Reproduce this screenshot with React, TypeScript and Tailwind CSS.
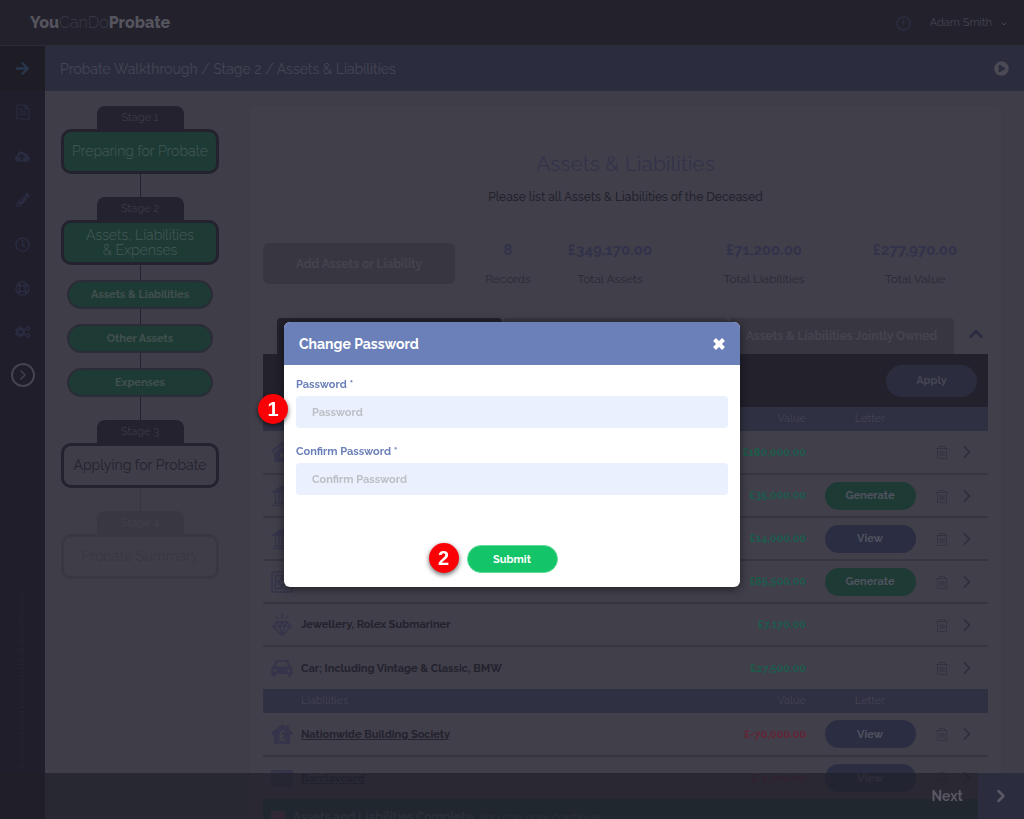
import React, { useState } from "react";
import {
  FaArrowRight,
  FaCloudUploadAlt,
  FaCogs,
  FaPencilAlt,
  FaPlayCircle,
  FaRegClock,
  FaRegLifeRing,
} from "react-icons/fa";
import { FiChevronDown, FiChevronRight, FiChevronUp } from "react-icons/fi";

const navItems = [
  { label: "Documents", icon: <DocIcon /> },
  { label: "Upload", icon: <FaCloudUploadAlt size={15} /> },
  { label: "Edit", icon: <FaPencilAlt size={14} /> },
  { label: "History", icon: <FaRegClock size={15} /> },
  { label: "Support", icon: <FaRegLifeRing size={15} /> },
  { label: "Settings", icon: <FaCogs size={16} /> },
];

const stats = [
  { value: "8", label: "Records" },
  { value: "£349,170.00", label: "Total Assets" },
  { value: "£71,200.00", label: "Total Liabilities" },
  { value: "£277,970.00", label: "Total Value" },
];

type Row = {
  icon: React.ReactNode;
  name: string;
  value: string;
  letter?: "Generate" | "View";
  link?: boolean;
};

const assets: Row[] = [
  { icon: <HouseIcon />, name: "Property", value: "£180,000.00" },
  { icon: <BankIcon />, name: "Bank Account", value: "£35,000.00", letter: "Generate" },
  { icon: <BankIcon />, name: "Savings", value: "£14,000.00", letter: "View" },
  { icon: <SafeIcon />, name: "Investments", value: "£85,500.00", letter: "Generate" },
  { icon: <DiamondIcon />, name: "Jewellery, Rolex Submariner", value: "£7,170.00" },
  { icon: <CarIcon />, name: "Car; Including Vintage & Classic, BMW", value: "£27,500.00" },
];

const liabilities: Row[] = [
  { icon: <MortgageIcon />, name: "Nationwide Building Society", value: "£-70,000.00", letter: "View", link: true },
  { icon: <CardIcon />, name: "Barclaycard", value: "£-1,200.00", letter: "View", link: true },
];

function DocIcon() {
  return (
    <svg width="14" height="16" viewBox="0 0 14 16" fill="none" stroke="currentColor" strokeWidth="1.2">
      <path d="M1 1h8l4 4v10H1zM9 1v4h4M3.5 8h7M3.5 10.500h7M3.5 5.500h3" />
    </svg>
  );
}

function HouseIcon() {
  return (
    <svg width="22" height="22" viewBox="0 0 22 22" fill="currentColor">
      <path d="M11 1 0 10l1.500 1.600L11 4l9.500 7.600L22 10l-4-3.300V2h-3v2.200z" />
      <path fillRule="evenodd" d="M3.500 12 11 6l7.500 6v9h-15zM9 12v4h4v-4z" />
    </svg>
  );
}

function BankIcon() {
  return (
    <svg width="22" height="22" viewBox="0 0 22 22" fill="none" stroke="currentColor" strokeWidth="1.500">
      <path d="M2 7 11 1.500 20 7z" fill="currentColor" />
      <path d="M4.500 8v9M8 8v9M14 8v9M17.500 8v9M11 8v9M3 18h16M1 20.500h20" />
    </svg>
  );
}

function SafeIcon() {
  return (
    <svg width="22" height="22" viewBox="0 0 22 22" fill="none" stroke="currentColor" strokeWidth="1.600">
      <rect x="1" y="1" width="20" height="20" rx="2" />
      <rect x="4.500" y="4.500" width="13" height="13" />
      <circle cx="11" cy="11" r="3" />
      <path d="M11 5v3M11 14v3M5 11h3M14 11h3" />
    </svg>
  );
}

function DiamondIcon() {
  return (
    <svg width="22" height="22" viewBox="0 0 22 22" fill="none" stroke="currentColor" strokeWidth="1.500">
      <path d="M6 8h10l4 4.500L11 21.500 2 12.500zM2 12.500h18M6 8l2.500 4.500L11 21l2.500-8.500L16 8M8.500 12.500 11 8l2.500 4.500M11 0v4.500M5 1.500l2 3.500M17 1.500 15 5" />
    </svg>
  );
}

function CarIcon() {
  return (
    <svg width="22" height="18" viewBox="0 0 22 18" fill="currentColor">
      <path
        fillRule="evenodd"
        d="M6 1h10q1.500 0 2 1.500L19.300 7H21v1.500l-1 .3q2 1.200 2 3V15h-1.500v2.500h-3.500V15H5v2.500H1.500V15H0v-3.200q0-1.800 2-3L1 8.500V7h1.700L4 2.500Q4.500 1 6 1zm.3 1.800L5 7.500h12l-1.300-4.700zM4 10a1.500 1.500 0 1 0 0 3 1.500 1.500 0 0 0 0-3zm14 0a1.500 1.500 0 1 0 0 3 1.500 1.500 0 0 0 0-3z"
      />
    </svg>
  );
}

function MortgageIcon() {
  return (
    <svg width="22" height="20" viewBox="0 0 22 20" fill="none">
      <path fill="#35344a" d="M11 0 0 9l1.200 2H3v9h16v-9h1.800L22 9l-3.500-3V1H15v2z" />
      <path stroke="#403f49" strokeWidth="1.800" d="M14 8.500Q13 6.500 11 7t-1 4v2.500Q10 15.500 8 16h6.500M8 12h5" />
    </svg>
  );
}

function CardIcon() {
  return (
    <svg width="22" height="17" viewBox="0 0 22 17">
      <rect width="22" height="17" rx="1" fill="#35344a" />
      <path d="M2 3h8M2 9h18" stroke="#403f49" strokeWidth="1" />
    </svg>
  );
}

function TrashIcon() {
  return (
    <svg width="14" height="14" viewBox="0 0 14 14" fill="none" stroke="currentColor" strokeWidth="1">
      <path d="M1 3.500h12M4.500 3.500v-2h5v2M2.500 3.500v10h9v-10M5 6v5M7 6v5M9 6v5" />
    </svg>
  );
}

function Stage({ title, faded, done, children }: { title: string; faded?: boolean; done?: boolean; children: React.ReactNode }) {
  return (
    <div className="flex w-full flex-col items-center">
      <div
        className={`h-[23px] w-[87px] rounded-t-lg pt-1 text-center text-[11px] leading-4 ${
          faded ? "bg-[#393842] text-[#42414b]" : "bg-[#23222e] text-[#3c3b47]"
        }`}
      >
        {title}
      </div>
      <a
        href="#"
        className={`flex h-[45px] w-full items-center justify-center rounded-[10px] border-[3px] text-center text-sm leading-[15px] ${
          faded ? "border-[#393842] text-[#383741]" : "border-[#23222e]"
        } ${done ? "bg-[#1e3a34] font-light text-[#465a5a]" : faded ? "" : "text-[#23222d]"}`}
      >
        <span>{children}</span>
      </a>
    </div>
  );
}

function Step({ children }: { children: React.ReactNode }) {
  return (
    <>
      <div className="h-[15px] w-px bg-[#23222e]" />
      <a
        href="#"
        className="flex h-[29px] w-[146px] items-center justify-center rounded-full border-2 border-[#2b2c37] bg-[#1e3a34] pt-0.5 text-[11px] font-bold text-[#42504f]"
      >
        {children}
      </a>
    </>
  );
}

function SectionHead({ title }: { title: string }) {
  return (
    <tr className="h-6 bg-[#2f3042] text-[11px] text-[#434254]">
      <th />
      <th className="text-left font-normal">{title}</th>
      <th className="text-right font-normal">Value</th>
      <th className="font-normal">Letter</th>
      <th />
      <th />
    </tr>
  );
}

function AssetRow({ row, last }: { row: Row; last?: boolean }) {
  return (
    <tr className={`h-[43px] text-[11px] font-bold ${last ? "" : "border-b-2 border-[#373640]"}`}>
      <td className="pl-2 text-[#35344a]">{row.icon}</td>
      <td className="truncate pt-0.5 text-[#23222d]">
        {row.link ? (
          <a href="#" className="underline">
            {row.name}
          </a>
        ) : (
          row.name
        )}
      </td>
      <td className={`pt-0.5 text-right ${row.value.includes("-") ? "text-[#642535]" : "text-[#1c5c4a]"}`}>{row.value}</td>
      <td className="text-center">
        {row.letter && (
          <button
            className={`h-7 w-[91px] rounded-full pt-0.5 align-middle text-[#50535f] ${
              row.letter === "View" ? "bg-[#2b2d42]" : "bg-[#1e3a34]"
            }`}
          >
            {row.letter}
          </button>
        )}
      </td>
      <td>
        <button aria-label={`Delete ${row.name}`} className="block px-px text-[#34333e]">
          <TrashIcon />
        </button>
      </td>
      <td>
        <button aria-label={`Open ${row.name}`} className="block pl-[7px] text-[#2e2d39]">
          <FiChevronRight size={20} />
        </button>
      </td>
    </tr>
  );
}

function Badge({ children, className }: { children: React.ReactNode; className: string }) {
  return (
    <span
      className={`absolute flex size-[30px] items-center justify-center rounded-full bg-[#fb0007] font-['Liberation_Sans'] text-xl font-bold text-white shadow-[0_2px_5px_rgba(0,0,0,0.6)] ${className}`}
    >
      {children}
    </span>
  );
}

function ChangePassword() {
  const [password, setPassword] = useState("");
  const [confirm, setConfirm] = useState("");
  const labelStyle = "mb-[3px] block text-[11px] leading-4 font-bold text-[#6b80b9]";
  const inputStyle =
    "h-8 w-full rounded bg-[#eaf0fd] px-4 text-[11px] font-bold outline-none placeholder:text-[#bcbfc6]";

  return (
    <div className="fixed inset-0 flex items-start justify-center pt-[322px]">
      <form
        role="dialog"
        aria-label="Change Password"
        className="w-full max-w-[456px] rounded-md bg-white shadow-[0_2px_10px_rgba(0,0,0,0.5)]"
        onSubmit={(e) => e.preventDefault()}
      >
        <div className="flex h-[43px] items-center justify-between rounded-t-md bg-[#6b80b9] px-[15px] text-white">
          <h2 className="text-sm font-bold">Change Password</h2>
          <button type="button" aria-label="Close">
            <svg width="12" height="12" viewBox="0 0 12 12" stroke="currentColor" strokeWidth="4">
              <path d="m1.500 1.500 9 9M10.500 1.500l-9 9" />
            </svg>
          </button>
        </div>
        <div className="px-3 pt-3 pb-[14px]">
          <div className="relative mb-4">
            <label htmlFor="password" className={labelStyle}>
              Password *
            </label>
            <input
              id="password"
              type="password"
              placeholder="Password"
              value={password}
              onChange={(e) => setPassword(e.target.value)}
              className={inputStyle}
            />
            <Badge className="top-[17px] left-[-38px]">1</Badge>
          </div>
          <div className="mb-[50px]">
            <label htmlFor="confirm" className={labelStyle}>
              Confirm Password *
            </label>
            <input
              id="confirm"
              type="password"
              placeholder="Confirm Password"
              value={confirm}
              onChange={(e) => setConfirm(e.target.value)}
              className={inputStyle}
            />
          </div>
          <div className="flex justify-center">
            <div className="relative">
              <button
                type="submit"
                className="block h-7 w-[91px] rounded-full border border-[#5fdc98] bg-[#13c468] pt-0.5 text-[11px] font-bold text-white"
              >
                Submit
              </button>
              <Badge className="top-[-2px] left-[-38px]">2</Badge>
            </div>
          </div>
        </div>
      </form>
    </div>
  );
}

const App = () => {
  return (
    <div className="flex h-screen flex-col overflow-hidden bg-[#3f3e48] font-['Raleway','Lato',sans-serif]">
      <header className="flex h-[46px] shrink-0 items-center justify-between border-b border-[#2c2b38] bg-[#22212c] pr-4 pl-[30px]">
        <a href="#" className="text-base text-[#3b3a45]">
          <b className="font-extrabold text-[#55545d]">You</b>
          <span className="font-light">CanDo</span>
          <b className="font-extrabold text-[#55545d]">Probate</b>
        </a>
        <div className="flex items-center pt-0.5 text-[11px] text-[#474651]">
          <svg className="mr-[19px] text-[#2b2d42]" width="15" height="15" viewBox="0 0 15 15" fill="none" stroke="currentColor" strokeWidth="1.500">
            <circle cx="7.500" cy="7.500" r="6.500" />
            <path d="M7.500 4v5" />
          </svg>
          <button className="flex items-center gap-2">
            Adam Smith
            <FiChevronDown size={8} strokeWidth={3} />
          </button>
        </div>
      </header>

      <div className="flex min-h-0 grow">
        <nav className="flex w-[45px] shrink-0 flex-col items-center bg-[#1f1e2a] text-[#292b41]">
          <a href="#" aria-label="Walkthrough" className="flex h-11 w-full items-center justify-center bg-[#1e1d26] text-[#27364d]">
            <FaArrowRight size={15} />
          </a>
          {navItems.map((item) => (
            <a key={item.label} href="#" aria-label={item.label} className="flex h-11 w-full items-center justify-center">
              {item.icon}
            </a>
          ))}
          <button aria-label="Expand menu" className="mt-[9px] flex size-6 items-center justify-center rounded-full border-2 border-[#444350] text-[#444350]">
            <FiChevronRight size={16} />
          </button>
          <p className="mt-auto mb-1 rotate-180 text-[7px] text-[#282734] [writing-mode:vertical-rl]">
            © Copyright 2021 Kings Court Ltd. All Rights Reserved
          </p>
          <div className="h-[46px] w-full shrink-0 bg-[#201f27]" />
        </nav>

        <div className="min-w-0 grow">
          <div className="flex h-[45px] items-center justify-between bg-[#2b2d3f] px-[15px] text-sm text-[#454653]">
            <h1>Probate Walkthrough / Stage 2 / Assets &amp; Liabilities</h1>
            <button aria-label="Play video" className="text-[#4b4a54]">
              <FaPlayCircle size={15} />
            </button>
          </div>

          <div className="flex items-start gap-[31px] pt-[15px] pr-[23px] pl-4">
            <aside className="flex w-[158px] shrink-0 flex-col items-center">
              <Stage title="Stage 1" done>
                Preparing for Probate
              </Stage>
              <div className="h-[23px] w-px bg-[#23222e]" />
              <Stage title="Stage 2" done>
                Assets, Liabilities
                <br />
                &amp; Expenses
              </Stage>
              <Step>Assets &amp; Liabilities</Step>
              <Step>Other Assets</Step>
              <Step>Expenses</Step>
              <div className="h-[23px] w-px bg-[#23222e]" />
              <Stage title="Stage 3">Applying for Probate</Stage>
              <div className="h-[23px] w-px bg-[#383741]" />
              <Stage title="Stage 4" faded>
                Probate Summary
              </Stage>
            </aside>

            <main className="min-w-0 grow rounded bg-[#413f4a] px-[13px] pt-11">
              <h2 className="text-center text-[21px] leading-7 text-[#33334a]">Assets &amp; Liabilities</h2>
              <p className="mt-[9px] text-center text-xs leading-5 font-medium text-[#23222d]">
                Please list all Assets &amp; Liabilities of the Deceased
              </p>

              <div className="mt-9 grid grid-cols-[192px_106fr_98fr_210fr_92fr_27fr]">
                <button className="h-[41px] self-start rounded-md bg-[#383741] text-xs font-bold text-[#44434d]">
                  Add Assets or Liability
                </button>
                {stats.map((s) => (
                  <div key={s.label} className="flex flex-col items-center whitespace-nowrap">
                    <b className="text-[15px] leading-[14px] text-[#31324b]">{s.value}</b>
                    <span className="mt-3 text-xs leading-5 text-[#2a2934]">{s.label}</span>
                  </div>
                ))}
              </div>

              <div className="mt-[29px] flex h-9 items-stretch gap-px pl-[14px] text-xs font-bold text-[#45444e]">
                <button className="w-[225px] rounded-t bg-[#22212c]">Solely Owned</button>
                <button className="w-[225px] rounded-t bg-[#383741]">All Assets</button>
                <button className="w-[225px] rounded-t bg-[#383741] whitespace-nowrap">
                  Assets &amp; Liabilities Jointly Owned
                </button>
                <button aria-label="Collapse" className="ml-[10px] pb-1 text-[#2b2c42]">
                  <FiChevronUp size={22} strokeWidth={3} />
                </button>
              </div>

              <div className="flex h-[53px] items-center justify-end bg-[#22212c] pr-[11px]">
                <button className="h-8 w-[91px] rounded-full bg-[#2b2c3e] pt-0.5 text-[11px] font-bold text-[#454653]">
                  Apply
                </button>
              </div>

              <table className="w-full table-fixed border-collapse">
                <colgroup>
                  <col className="w-[38px]" />
                  <col />
                  <col className="w-[110px]" />
                  <col className="w-[128px]" />
                  <col className="w-4" />
                  <col className="w-[38px]" />
                </colgroup>
                <tbody>
                  <SectionHead title="Assets" />
                  {assets.map((row, i) => (
                    <AssetRow key={row.name} row={row} last={i === assets.length - 1} />
                  ))}
                  <SectionHead title="Liabilities" />
                  {liabilities.map((row, i) => (
                    <AssetRow key={row.name} row={row} last={i === liabilities.length - 1} />
                  ))}
                </tbody>
              </table>
              <div className="flex h-9 items-center gap-2 bg-[#1e3a34] px-2 text-xs text-[#4a5b5c]">
                <span className="h-3 w-[14px] bg-[#5d3f4c]" />
                <p>
                  <b>Assets and Liabilities Complete.</b> You can now continue
                </p>
              </div>
            </main>
          </div>
        </div>
      </div>

      <footer className="fixed right-0 bottom-0 left-[45px] flex h-[46px] items-center justify-end bg-[#22212c]/75 text-sm font-bold text-[#5a5963]">
        <a href="#" className="flex h-full items-center gap-[15px]">
          Next
          <span className="flex h-full w-[46px] items-center justify-center bg-[#2b2d3f]">
            <FiChevronRight size={20} strokeWidth={3} />
          </span>
        </a>
      </footer>

      <ChangePassword />
    </div>
  );
};

export default App;
